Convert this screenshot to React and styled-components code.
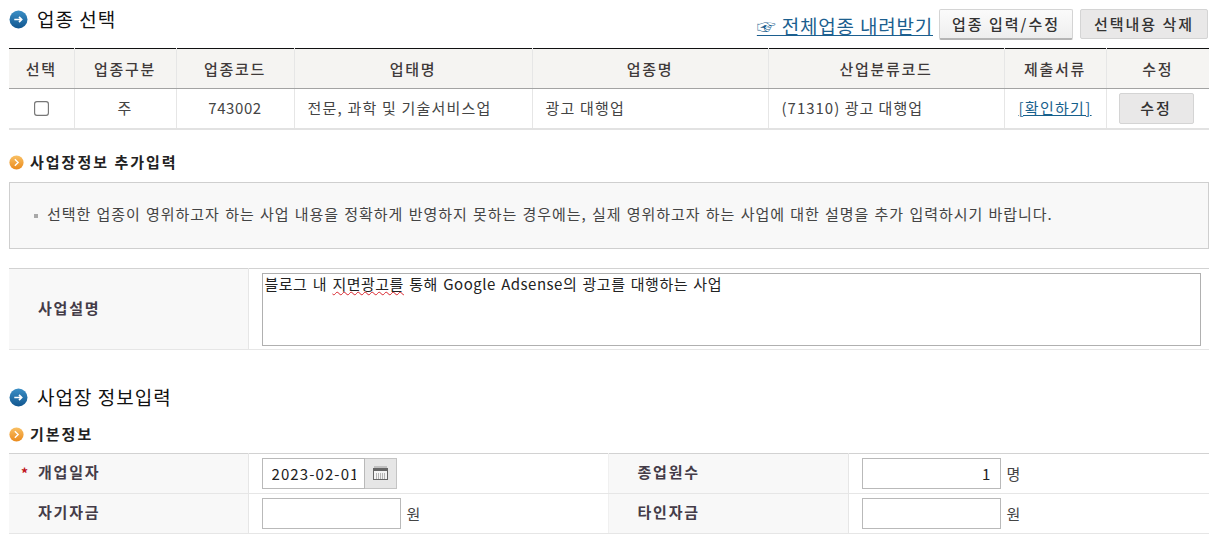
import styled, { createGlobalStyle } from "styled-components";

const GlobalStyle = createGlobalStyle`
  html, body { margin: 0; padding: 0; background: #fff; }
  body { font-family: "Noto Sans CJK KR", "Liberation Sans", sans-serif; color: #333; overflow: hidden; }
`;
const Page = styled.div`
  width: 1200px;
  height: 541px;
  margin-left: 9px;
  overflow: hidden;
`;
const TitleRow = styled.div`
  display: flex;
  align-items: flex-start;
  justify-content: space-between;
  height: 48px;
  padding-top: 9px;
  box-sizing: border-box;
`;
const Title = styled.h2`
  display: flex;
  align-items: center;
  gap: 9px;
  margin: ${(p) => p.$margin || "0"};
  height: 20px;
  font-size: 19px;
  font-weight: 400;
  color: #111;
  letter-spacing: 1px;
`;
const HeadText = styled.span`
  margin-top: -2px;
`;
const Actions = styled.div`
  display: flex;
  align-items: flex-start;
  padding-right: 1px;
`;
const DownloadLink = styled.a`
  margin: 6px 6px 0 0;
  font-size: 19px;
  line-height: 22px;
  letter-spacing: 0.8px;
  color: #1c5f8f;
  text-decoration: underline;
`;
const Button = styled.button`
  height: ${(p) => p.$h}px;
  width: ${(p) => p.$w}px;
  margin-left: ${(p) => p.$ml || 0}px;
  padding: 0 0 2px;
  font-family: inherit;
  font-size: 15px;
  font-weight: 500;
  letter-spacing: 2px;
  color: #333;
  background: ${(p) => p.$light ? "linear-gradient(#fbfbfb, #eeeeee)" : "#e9e8e8"};
  border: 1px solid #d4d4d4;
  border-bottom: ${(p) => p.$light ? "2px solid #b5b5b5" : "1px solid #d4d4d4"};
  border-radius: 2px;
`;
const EditButton = styled(Button)`
  display: block;
  margin-top: 2px;
`;
const Table = styled.table`
  width: 100%;
  table-layout: fixed;
  border-collapse: collapse;
  font-size: 15px;
`;
const IndustryTable = styled(Table)`
  border-top: 1px solid #111;
  border-bottom: 2px solid #e2e2e2;
`;
const HeadCell = styled.th`
  height: 39px;
  padding: 0;
  background: #f5f4f2;
  border-left: 1px solid #e6e6e6;
  border-bottom: 1px solid #a3a3a3;
  font-size: 15px;
  font-weight: 500;
  letter-spacing: 1.7px;
  color: #3f3a3a;
  &:first-child { border-left: 0; }
`;
const BodyCell = styled.td`
  height: 40px;
  box-sizing: border-box;
  padding: ${(p) => (p.$left ? "0 0 2px 13px" : "0 0 2px")};
  border-left: 1px solid #e6e6e6;
  text-align: ${(p) => (p.$left ? "left" : "center")};
  color: #444;
  letter-spacing: ${(p) => p.$ls ?? 1.2}px;
  &:first-child { border-left: 0; }
`;
const Check = styled.input`
  display: block;
  width: 13px;
  height: 13px;
  margin: 2px auto 0;
  transform: scale(1.15);
`;
const DocLink = styled.a`
  letter-spacing: 1.3px;
  color: #17608c;
  text-decoration: underline;
`;
const SubTitle = styled.h3`
  display: flex;
  align-items: center;
  gap: 6px;
  height: 16px;
  margin: ${(p) => p.$margin};
  font-size: 15px;
  font-weight: 700;
  letter-spacing: 2px;
  color: #222;
`;
const Notice = styled.div`
  display: flex;
  align-items: center;
  height: 67px;
  margin-top: 11px;
  padding: 0 0 3px 24px;
  box-sizing: border-box;
  background: #f8f8f8;
  border: 1px solid #cfcfcf;
  font-size: 15px;
  letter-spacing: 0.95px;
  word-spacing: 1px;
  color: #444;
  &::before {
    content: "";
    width: 4px;
    height: 4px;
    margin: 5px 9px 0 0;
    background: #a9a9a9;
  }
`;
const FormTable = styled(Table)`
  margin-top: ${(p) => p.$mt}px;
  border-top: 1px solid #d2d2d2;
  border-bottom: 1px solid #d2d2d2;
`;
const Label = styled.th`
  height: ${(p) => p.$h || 40}px;
  padding: 0 0 3px 29px;
  box-sizing: border-box;
  text-align: left;
  position: relative;
  background: #f8f8f8;
  border-left: 1px solid #f0f0f0;
  border-right: 1px solid #e6e6e6;
  border-bottom: 1px solid #e6e6e6;
  font-size: 15px;
  font-weight: 700;
  letter-spacing: 1.8px;
  color: #443c48;
  &:first-child { border-left: 0; }
`;
const Required = styled.span`
  position: absolute;
  left: 12px;
  top: 9px;
  color: #c0141c;
  font-size: 14px;
`;
const Field = styled.td`
  padding: 0 0 0 13px;
  border-bottom: 1px solid #e6e6e6;
  color: #444;
`;
const FieldRow = styled.div`
  display: flex;
  align-items: center;
  gap: 6px;
`;
const TextInput = styled.input`
  width: ${(p) => p.$w || 139}px;
  height: 31px;
  box-sizing: border-box;
  padding: 0 8px 0 9px;
  border: 1px solid #b9b9b9;
  border-radius: 0;
  background: #fff;
  font-family: inherit;
  font-size: 15px;
  letter-spacing: 1.1px;
  text-align: ${(p) => p.$align || "left"};
  color: #222;
`;
const DateBox = styled.div`
  display: flex;
  height: 31px;
`;
const CalendarButton = styled.button`
  display: flex;
  align-items: center;
  justify-content: center;
  width: 32px;
  height: 31px;
  padding: 0;
  background: #e6e6e6;
  border: 1px solid #c4c4c4;
  border-left: 0;
`;
const Memo = styled.div`
  width: 939px;
  height: 73px;
  margin-top: 2px;
  box-sizing: border-box;
  padding: 0 2px;
  border: 1px solid #b0b0b0;
  font-size: 15px;
  line-height: 19px;
  letter-spacing: 0.5px;
  word-spacing: 1.5px;
  color: #222;
`;
const Misspelled = styled.span`
  text-decoration: underline wavy #d8242c 1px;
`;

function RoundIcon({ id, size, from, to, arrow }) {
  return (
    <svg width={size} height={size} viewBox="0 0 18 18" style={{ flex: "none" }}>
      <defs>
        <linearGradient id={id} x1="0" y1="0" x2="0" y2="1">
          <stop offset="0" stopColor={from} />
          <stop offset="1" stopColor={to} />
        </linearGradient>
      </defs>
      <circle cx="9" cy="9" r="8.5" fill={`url(#${id})`} />
      <path d={arrow} fill="none" stroke="#fff" strokeWidth="1.6" />
    </svg>
  );
}
const BlueIcon = () => <RoundIcon id="blue" size={19} from="#3b8fc6" to="#11568f" arrow="M5 9h7M9.500 6.500L12 9l-2.500 2.500" />;
const OrangeIcon = () => <RoundIcon id="orange" size={15} from="#f9c064" to="#ea8a1c" arrow="M7 5l4 4-4 4" />;

function CalendarIcon() {
  return (
    <svg width="15" height="14" viewBox="0 0 15 14">
      <rect x="1" y="0.500" width="13" height="1" fill="#999" />
      <rect x="0.500" y="2.500" width="14" height="11" fill="#f4f4f4" stroke="#666" />
      <rect x="1" y="3" width="13" height="2" fill="#666" />
      <path d="M3 8h9M3 10h9M3 12h9" stroke="#777" strokeDasharray="1 1" />
    </svg>
  );
}

const heads = ["선택", "업종구분", "업종코드", "업태명", "업종명", "산업분류코드", "제출서류", "수정"];
const widths = [65, 102, 118, 238, 236, 236, 102, 103];
const formWidths = [239, 360, 240, 361];

export default function App() {
  return (
    <Page>
      <GlobalStyle />
      <TitleRow>
        <Title>
          <BlueIcon />
          <HeadText>업종 선택</HeadText>
        </Title>
        <Actions>
          <DownloadLink href="#">☞ 전체업종 내려받기</DownloadLink>
          <Button $light $w={134} $h={31}>업종 입력/수정</Button>
          <Button $w={128} $h={30} $ml={7}>선택내용 삭제</Button>
        </Actions>
      </TitleRow>
      <IndustryTable>
        <colgroup>
          {widths.map((w, i) => <col key={i} width={w} />)}
        </colgroup>
        <thead>
          <tr>{heads.map((h) => <HeadCell key={h}>{h}</HeadCell>)}</tr>
        </thead>
        <tbody>
          <tr>
            <BodyCell><Check type="checkbox" /></BodyCell>
            <BodyCell>주</BodyCell>
            <BodyCell $ls={0.6}>743002</BodyCell>
            <BodyCell $left>전문, 과학 및 기술서비스업</BodyCell>
            <BodyCell $left>광고 대행업</BodyCell>
            <BodyCell $left $ls={1}>(71310) 광고 대행업</BodyCell>
            <BodyCell><DocLink href="#">[확인하기]</DocLink></BodyCell>
            <BodyCell><EditButton $w={75} $h={31} $ml={12}>수정</EditButton></BodyCell>
          </tr>
        </tbody>
      </IndustryTable>
      <SubTitle $margin="25px 0 0 0">
        <OrangeIcon />
        <HeadText>사업장정보 추가입력</HeadText>
      </SubTitle>
      <Notice>선택한 업종이 영위하고자 하는 사업 내용을 정확하게 반영하지 못하는 경우에는, 실제 영위하고자 하는 사업에 대한 설명을 추가 입력하시기 바랍니다.</Notice>
      <FormTable $mt={19}>
        <colgroup>
          <col width={239} />
          <col width={961} />
        </colgroup>
        <tbody>
          <tr>
            <Label $h={81}>사업설명</Label>
            <Field>
              <Memo>블로그 내 <Misspelled>지면광고를</Misspelled> 통해 Google Adsense의 광고를 대행하는 사업</Memo>
            </Field>
          </tr>
        </tbody>
      </FormTable>
      <Title $margin="38px 0 0 0">
        <BlueIcon />
        <HeadText>사업장 정보입력</HeadText>
      </Title>
      <SubTitle $margin="19px 0 0 0">
        <OrangeIcon />
        <HeadText>기본정보</HeadText>
      </SubTitle>
      <FormTable $mt={10}>
        <colgroup>
          {formWidths.map((w, i) => <col key={i} width={w} />)}
        </colgroup>
        <tbody>
          <tr>
            <Label><Required>*</Required>개업일자</Label>
            <Field>
              <DateBox>
                <TextInput $w={103} defaultValue="2023-02-01" />
                <CalendarButton><CalendarIcon /></CalendarButton>
              </DateBox>
            </Field>
            <Label>종업원수</Label>
            <Field>
              <FieldRow>
                <TextInput $align="right" defaultValue="1" />
                명
              </FieldRow>
            </Field>
          </tr>
          <tr>
            <Label>자기자금</Label>
            <Field>
              <FieldRow>
                <TextInput />
                원
              </FieldRow>
            </Field>
            <Label>타인자금</Label>
            <Field>
              <FieldRow>
                <TextInput />
                원
              </FieldRow>
            </Field>
          </tr>
        </tbody>
      </FormTable>
    </Page>
  );
}
